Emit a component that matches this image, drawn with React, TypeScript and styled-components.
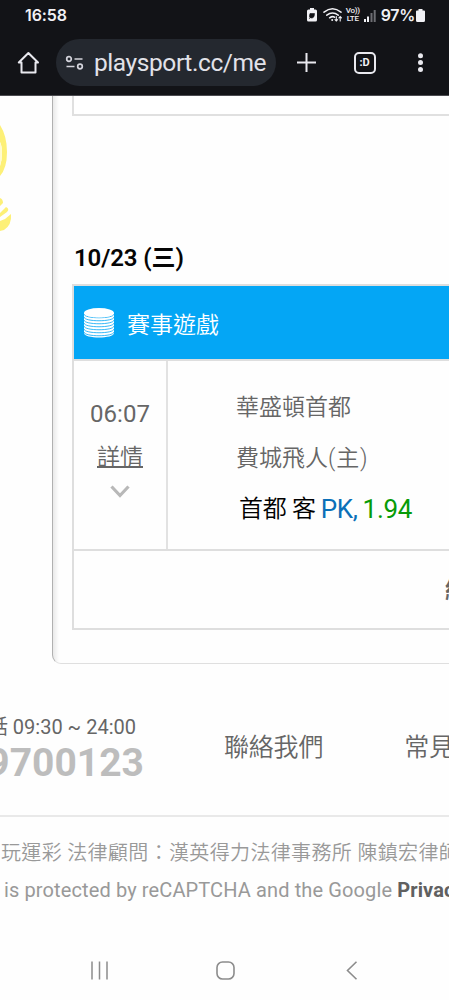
import React from 'react';
import styled, { createGlobalStyle } from 'styled-components';

const GlobalStyle = createGlobalStyle`
  * { box-sizing: border-box; }
  body { margin: 0; background: #fff; }
`;

const Screen = styled.div`
  width: 449px;
  height: 1000px;
  overflow: hidden;
  display: flex;
  flex-direction: column;
  background: #fefefe;
  color: #666;
  font-family: Roboto, 'Noto Sans CJK TC', sans-serif;
  white-space: nowrap;
`;

const BrowserChrome = styled.header`
  flex: none;
  height: 96px;
  background: #121317;
  border-bottom: 1px solid #4b4b50;
  color: #f1f1f5;
`;

const StatusBar = styled.div`
  height: 30px;
  padding: 0 24px 0 25px;
  display: flex;
  align-items: center;
  justify-content: space-between;
  font: 700 16px/30px Inter, sans-serif;
`;

const Clock = styled.span`
  font-weight: 600;
  letter-spacing: -0.1px;
`;

const StatusIcons = styled.div`
  display: flex;
  align-items: center;
`;

const Percent = styled.span`
  font-size: 16px;
  font-weight: 600;
  letter-spacing: -0.3px;
  margin: 0 1px 0 5px;
`;

const VoLte = styled.span`
  width: 14px;
  margin: 0 4px 0 3px;
  font: 500 8px/8px Roboto, sans-serif;
  letter-spacing: -0.3px;
  text-align: center;
`;

const Toolbar = styled.div`
  height: 65px;
  padding: 0 17px 0 16px;
  display: flex;
  align-items: center;
`;

const AddressPill = styled.div`
  width: 220px;
  height: 47px;
  margin: 0 19px 0 15px;
  padding: 0 9px 0 9px;
  border-radius: 24px;
  background: #24282f;
  display: flex;
  align-items: center;
`;

const Url = styled.div`
  flex: 1;
  margin-left: 10px;
  overflow: hidden;
  font: 400 24.5px/36px Roboto, sans-serif;
  color: #e2e2e9;
  letter-spacing: -0.42px;
`;

const ToolbarIcons = styled.div`
  flex: 1;
  display: flex;
  align-items: center;
  justify-content: space-between;
`;

const TabCount = styled.div`
  width: 22px;
  height: 22px;
  border: 2px solid #e9e9ef;
  border-radius: 5px;
  font: 700 11px/17px Roboto, sans-serif;
  text-align: center;
`;

const Body = styled.main`
  flex: none;
  height: 568px;
  display: flex;
`;

const Gutter = styled.aside`
  width: 52px;
  flex: none;
`;

const Panel = styled.section`
  flex: none;
  width: 440px;
  padding-left: 19px;
  border-left: 1px solid #b0b0b0;
  border-bottom: 1px solid #dfdfdf;
  border-bottom-left-radius: 9px;
  background: linear-gradient(to right, #e9e9e9, #fefefe 6px);
`;

const PreviousCard = styled.div`
  height: 20px;
  border: solid #e0e0e0;
  border-width: 0 0 2px 2px;
  background: #fff;
`;

const DateHeading = styled.h2`
  margin: 122px 0 0;
  padding-left: 2px;
  height: 46px;
  font-size: 24px;
  line-height: 40px;
  font-weight: 600;
  color: #050505;
  letter-spacing: -0.1px;
`;

const Card = styled.article`
  height: 346px;
  border: 2px solid #dedede;
  background: #fefefe;
`;

const CardHeader = styled.div`
  height: 73px;
  padding-left: 9px;
  display: flex;
  align-items: center;
  gap: 11px;
  background: #04a6f5;
  color: #fff;
  font-size: 23px;
  line-height: 36px;
  font-weight: 350;
`;

const Sport = styled.span`
  padding-top: 6px;
`;

const GameRow = styled.div`
  height: 192px;
  display: flex;
  border: solid #dedede;
  border-width: 2px 0;
`;

const TimeCell = styled.div`
  width: 94px;
  padding-top: 33px;
  border-right: 2px solid #e2e2e2;
  display: flex;
  flex-direction: column;
  align-items: center;
  font-size: 23px;
  line-height: 40px;
`;

const Time = styled.span`
  font-size: 24px;
  font-weight: 400;
`;

const DetailLink = styled.a`
  margin-top: 4px;
  margin-bottom: 7px;
  font-weight: 350;
  text-decoration: underline;
  text-decoration-thickness: 2px;
  text-underline-offset: 1px;
`;

const Teams = styled.div`
  padding: 21px 0 0 68px;
  font-size: 23px;
  line-height: 51px;
  font-weight: 350;
`;

const HomeMark = styled.span`
  letter-spacing: 0.8px;
`;

const Pick = styled.div`
  padding-left: 3px;
  display: flex;
  gap: 5px;
  color: #111;
  font-size: 24px;
  font-weight: 400;
  letter-spacing: -0.3px;
`;

const PickTeam = styled.span`
  font-weight: 350;
  color: #000;
`;

const Bet = styled.span<{ $color: string }>`
  color: ${(p) => p.$color};
  font-size: 26px;
`;

const Summary = styled.div`
  padding-left: 371px;
  font-size: 23px;
  font-weight: 700;
  line-height: 80px;
`;

const Footer = styled.footer`
  flex: none;
  height: 277px;
`;

const Contact = styled.div`
  height: 153px;
  display: flex;
  border-bottom: 2px solid #e9e9e9;
`;

const Hotline = styled.div`
  width: 144px;
  display: flex;
  flex-direction: column;
  align-items: flex-end;
  padding-top: 49px;
`;

const Hours = styled.span`
  margin-right: 8px;
  font-size: 20px;
  line-height: 28px;
`;

const Phone = styled.strong`
  font-size: 39px;
  line-height: 45px;
  font-weight: 700;
  color: #bdbdbd;
`;

const FooterLink = styled.a<{ $gap: number }>`
  margin-left: ${(p) => p.$gap}px;
  font-size: 25px;
  line-height: 168px;
  font-weight: 350;
  letter-spacing: -0.2px;
`;

const Legal = styled.p`
  margin: 0;
  padding: 17px 0 0 1px;
  font-size: 20px;
  line-height: 38px;
  font-weight: 350;
  color: #999;
  letter-spacing: 0.35px;
`;

const Protection = styled(Legal)`
  padding: 0 0 0 4px;
  line-height: 36px;
  font-weight: 400;
  letter-spacing: 0.12px;

  b { color: #606060; }
`;

const NavBar = styled.nav`
  height: 59px;
  padding: 0 89px 0 91px;
  display: flex;
  align-items: center;
  justify-content: space-between;
`;

export default function App() {
  return (
    <Screen>
      <GlobalStyle />
      <BrowserChrome>
        <StatusBar>
          <Clock>16:58</Clock>
          <StatusIcons>
            <svg width="10" height="14" viewBox="0 0 10 14">
              <path d="M3 0h4v1.5h1.5q1.500 0 1.500 1.500v9q0 1.500-1.500 1.500h-7Q0 13.500 0 12V3q0-1.500 1.500-1.500H3z" fill="#f1f1f5" />
              <path d="M3 5.500h4.500q0 4.500-3 4.500-2.500 0-2-2.500zM2 11l3-3" fill="#121317" stroke="#121317" strokeWidth=".6" />
            </svg>
            <svg width="20" height="16" viewBox="0 0 20 16" fill="none" stroke="#f1f1f5" strokeWidth="1.500" strokeLinecap="round" style={{ marginLeft: 6 }}>
              <path d="M1 5.200Q9.500-1.800 18 5.200M3.800 8.200Q9.500 3.600 15.200 8.200M6.600 10.800Q9.500 8.800 11.500 10.200" />
              <circle cx="9.200" cy="13" r="1" fill="#f1f1f5" stroke="none" />
              <path d="M13.300 9.500v4.500m-1.300-1.300 1.300 1.300 1.300-1.300M17.200 14V9.500m-1.300 1.300 1.300-1.300 1.300 1.300" strokeWidth="1.100" />
            </svg>
            <VoLte>Vo))<br />LTE</VoLte>
            <svg width="12" height="13" viewBox="0 0 12 13">
              <path d="M0 10h2v3H0zM3 7.500h2V13H3z" fill="#f1f1f5" />
              <path d="M6.500 4h2v9h-2zM9.700 1h2v12h-2z" fill="#6c6d72" />
            </svg>
            <Percent>97%</Percent>
            <svg width="9" height="13" viewBox="0 0 9 13">
              <path d="M2.500 0h4v1.500H8q1 0 1 1v9Q9 13 7.500 13h-6Q0 13 0 11.500v-9q0-1 1-1h1.500z" fill="#f1f1f5" />
            </svg>
          </StatusIcons>
        </StatusBar>
        <Toolbar>
          <svg width="25" height="24" viewBox="0 0 25 24" fill="none" stroke="#e9e9ef" strokeWidth="2">
            <path d="M2.800 11.500 12.400 2l9.600 9.500h-2.500V21.500h-14V11.500z" strokeLinejoin="round" />
          </svg>
          <AddressPill>
            <svg width="19" height="16" viewBox="0 0 19 16" fill="none" stroke="#d4d4dc" strokeWidth="1.700">
              <circle cx="4" cy="4" r="2.300" />
              <path d="M9.500 4h8M1.500 11.500h8" />
              <circle cx="15" cy="11.500" r="2.300" />
            </svg>
            <Url>playsport.cc/member</Url>
          </AddressPill>
          <ToolbarIcons>
            <svg width="24" height="24" viewBox="0 0 24 24" stroke="#e9e9ef" strokeWidth="2">
              <path d="M2 11.500h19M11.500 2v19" />
            </svg>
            <TabCount>:D</TabCount>
            <svg width="22" height="22" viewBox="0 0 22 22" fill="#e9e9ef">
              <circle cx="10.500" cy="3.700" r="2.500" />
              <circle cx="10.500" cy="10.500" r="2.500" />
              <circle cx="10.500" cy="17.500" r="2.500" />
            </svg>
          </ToolbarIcons>
        </Toolbar>
      </BrowserChrome>

      <Body>
        <Gutter>
          <svg width="52" height="150" viewBox="0 0 52 150">
            <path d="M0 29Q7 40 7 56T0 80V70Q2 64 2 57T0 46z" fill="#fdf077" />
            <path d="M0 46Q2 50 2 57T0 70z" fill="#fffbd0" />
            <path d="M0 102q3 1 3 5L0 110zM0 117l6-6q4 2 1 5l-7 5zM0 125l5-2 6-5q1 11-7 16l-4 1z" fill="#fdf077" />
          </svg>
        </Gutter>
        <Panel>
          <PreviousCard />
          <DateHeading>10/23 (三)</DateHeading>
          <Card>
            <CardHeader>
              <svg width="33" height="32" viewBox="0 0 33 32">
                <path d="M1 6v20c0 6 30 6 30 0V6z" fill="#fff" />
                <g fill="none" stroke="#04a6f5" strokeWidth="0.800">
                  <path d="M1 7c0 5 30 5 30 0M1 10c0 5 30 5 30 0M1 13c0 5 30 5 30 0M1 16c0 5 30 5 30 0M1 19c0 5 30 5 30 0M1 22c0 5 30 5 30 0M1 25c0 5 30 5 30 0" />
                </g>
                <ellipse cx="16" cy="5.800" rx="15" ry="4.800" fill="#fff" />
              </svg>
              <Sport>賽事遊戲</Sport>
            </CardHeader>
            <GameRow>
              <TimeCell>
                <Time>06:07</Time>
                <DetailLink>詳情</DetailLink>
                <svg width="20" height="14" viewBox="0 0 20 14">
                  <path d="M1.500 1.500 10 10.500l8.500-9" fill="none" stroke="#b8b8b8" strokeWidth="3.200" />
                </svg>
              </TimeCell>
              <Teams>
                <div>華盛頓首都</div>
                <div>費城飛人<HomeMark>(主)</HomeMark></div>
                <Pick>
                  <PickTeam>首都 客</PickTeam>
                  <Bet $color="#0b70b8">PK,</Bet>
                  <Bet $color="#079b07">1.94</Bet>
                </Pick>
              </Teams>
            </GameRow>
            <Summary>結算</Summary>
          </Card>
        </Panel>
      </Body>

      <Footer>
        <Contact>
          <Hotline>
            <Hours>客服電話 09:30 ~ 24:00</Hours>
            <Phone>9700123</Phone>
          </Hotline>
          <FooterLink $gap={80}>聯絡我們</FooterLink>
          <FooterLink $gap={81}>常見問題</FooterLink>
        </Contact>
        <Legal>玩運彩 法律顧問：漢英得力法律事務所 陳鎮宏律師</Legal>
        <Protection>is protected by reCAPTCHA and the Google <b>Privacy</b></Protection>
      </Footer>

      <NavBar>
        <svg width="17" height="19" viewBox="0 0 17 19" stroke="#8c8c8c" strokeWidth="1.500">
          <path d="M1 .5v18M8.500.5v18M16 .5v18" />
        </svg>
        <svg width="19" height="19" viewBox="0 0 19 19" fill="none" stroke="#8c8c8c" strokeWidth="1.600">
          <rect x="1" y="1" width="17" height="17" rx="5.500" />
        </svg>
        <svg width="17" height="19" viewBox="0 0 17 19" fill="none" stroke="#8c8c8c" strokeWidth="1.600">
          <path d="M13.500.7 4.500 9.500l9 8.800" />
        </svg>
      </NavBar>
    </Screen>
  );
}
